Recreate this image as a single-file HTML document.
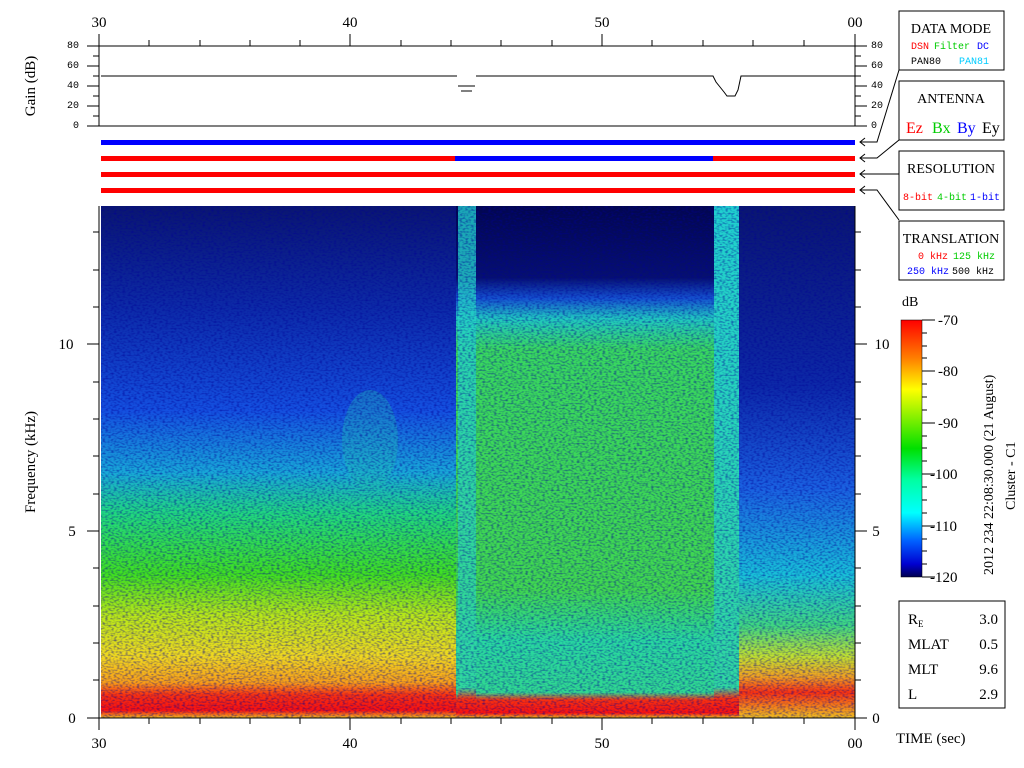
<!DOCTYPE html>
<html><head><meta charset="utf-8"><style>
html,body{margin:0;padding:0;background:#fff;}
svg{display:block;font-family:"Liberation Serif",serif;}
.m{font-family:"Liberation Mono",monospace;}
</style></head><body>
<svg width="1024" height="768" viewBox="0 0 1024 768" xmlns="http://www.w3.org/2000/svg">
<defs>
<linearGradient id="gl" x1="0" y1="0" x2="0" y2="1">
<stop offset="0" stop-color="#0a1670"/><stop offset="0.2" stop-color="#0c2aa8"/>
<stop offset="0.4" stop-color="#1450e0"/><stop offset="0.52" stop-color="#18a8d8"/>
<stop offset="0.6" stop-color="#20d880"/><stop offset="0.72" stop-color="#40e020"/>
<stop offset="0.8" stop-color="#b8e818"/><stop offset="0.88" stop-color="#f0d820"/>
<stop offset="0.93" stop-color="#f8a018"/><stop offset="0.955" stop-color="#f83010"/>
<stop offset="0.985" stop-color="#f81010"/><stop offset="1" stop-color="#f0c020"/>
</linearGradient>
<linearGradient id="gm" x1="0" y1="0" x2="0" y2="1">
<stop offset="0" stop-color="#020650"/><stop offset="0.14" stop-color="#061070"/>
<stop offset="0.18" stop-color="#1450d0"/><stop offset="0.22" stop-color="#20c8c0"/>
<stop offset="0.28" stop-color="#38d860"/><stop offset="0.75" stop-color="#40d850"/>
<stop offset="0.85" stop-color="#28d8a0"/><stop offset="0.95" stop-color="#30d890"/>
<stop offset="0.965" stop-color="#f83010"/><stop offset="0.99" stop-color="#f81010"/>
<stop offset="1" stop-color="#f0c020"/>
</linearGradient>
<linearGradient id="gr" x1="0" y1="0" x2="0" y2="1">
<stop offset="0" stop-color="#0a1670"/><stop offset="0.35" stop-color="#0c28a8"/>
<stop offset="0.55" stop-color="#1a60e0"/><stop offset="0.72" stop-color="#18c0d8"/>
<stop offset="0.82" stop-color="#40d880"/><stop offset="0.88" stop-color="#c0e030"/>
<stop offset="0.92" stop-color="#f0a020"/><stop offset="0.95" stop-color="#f83010"/>
<stop offset="1" stop-color="#f0c020"/>
</linearGradient>
<linearGradient id="gs" x1="0" y1="0" x2="0" y2="1">
<stop offset="0" stop-color="#20d0d0"/><stop offset="0.94" stop-color="#30d8a0"/>
<stop offset="0.962" stop-color="#f83010"/><stop offset="0.99" stop-color="#f81010"/><stop offset="1" stop-color="#f0c020"/>
</linearGradient>
<linearGradient id="cb" x1="0" y1="0" x2="0" y2="1">
<stop offset="0" stop-color="#ff0000"/><stop offset="0.15" stop-color="#ff8000"/>
<stop offset="0.27" stop-color="#ffff00"/><stop offset="0.5" stop-color="#00e000"/>
<stop offset="0.62" stop-color="#00ffa0"/><stop offset="0.75" stop-color="#00ffff"/>
<stop offset="0.86" stop-color="#0060ff"/><stop offset="0.95" stop-color="#0000d0"/>
<stop offset="1" stop-color="#000050"/>
</linearGradient>
<filter id="nz" x="0" y="0" width="1" height="1">
<feTurbulence type="fractalNoise" baseFrequency="0.35 0.6" numOctaves="1" seed="3"/>
<feColorMatrix values="0 0 0 0 0  0 0 0 0 0  0 0 0 0 0.3  0 0 0 1.4 -0.6"/>
</filter>
</defs>

<g font-size="15" text-anchor="middle">
<text x="99" y="27">30</text><text x="350" y="27">40</text><text x="602" y="27">50</text><text x="855" y="27">00</text>
</g>
<g stroke="#000" stroke-width="1">
<line x1="99" y1="34" x2="99" y2="46"/><line x1="350" y1="34" x2="350" y2="46"/><line x1="602" y1="34" x2="602" y2="46"/><line x1="855" y1="34" x2="855" y2="46"/>
<line x1="149" y1="40" x2="149" y2="46"/><line x1="200" y1="40" x2="200" y2="46"/><line x1="250" y1="40" x2="250" y2="46"/><line x1="300" y1="40" x2="300" y2="46"/>
<line x1="401" y1="40" x2="401" y2="46"/><line x1="451" y1="40" x2="451" y2="46"/><line x1="501" y1="40" x2="501" y2="46"/><line x1="552" y1="40" x2="552" y2="46"/>
<line x1="652" y1="40" x2="652" y2="46"/><line x1="703" y1="40" x2="703" y2="46"/><line x1="753" y1="40" x2="753" y2="46"/><line x1="804" y1="40" x2="804" y2="46"/>
<line x1="87" y1="46" x2="867" y2="46"/><line x1="87" y1="126" x2="867" y2="126"/>
<line x1="99" y1="46" x2="99" y2="126"/><line x1="855" y1="46" x2="855" y2="126"/>
<line x1="87" y1="66" x2="99" y2="66"/><line x1="87" y1="86" x2="99" y2="86"/><line x1="87" y1="106" x2="99" y2="106"/>
<line x1="93" y1="56" x2="99" y2="56"/><line x1="93" y1="76" x2="99" y2="76"/><line x1="93" y1="96" x2="99" y2="96"/><line x1="93" y1="116" x2="99" y2="116"/>
<line x1="855" y1="66" x2="867" y2="66"/><line x1="855" y1="86" x2="867" y2="86"/><line x1="855" y1="106" x2="867" y2="106"/>
<line x1="855" y1="56" x2="861" y2="56"/><line x1="855" y1="76" x2="861" y2="76"/><line x1="855" y1="96" x2="861" y2="96"/><line x1="855" y1="116" x2="861" y2="116"/>
<polyline fill="none" points="101,76 457,76"/><line x1="458" y1="86" x2="475" y2="86"/><line x1="461" y1="91" x2="472" y2="91"/>
<polyline fill="none" points="476,76 713,76 716,82 720,87 724,92 727,96 735,96 738,90 741,76 855,76"/>
</g>
<g font-size="10" class="m" text-anchor="end">
<text x="79" y="48">80</text><text x="79" y="68">60</text><text x="79" y="88">40</text><text x="79" y="108">20</text><text x="79" y="128">0</text>
</g>
<g font-size="10" class="m">
<text x="871" y="48">80</text><text x="871" y="68">60</text><text x="871" y="88">40</text><text x="871" y="108">20</text><text x="871" y="128">0</text>
</g>
<text font-size="15" transform="translate(35,86) rotate(-90)" text-anchor="middle">Gain (dB)</text>

<rect x="101" y="140" width="754" height="5" fill="#0000ff"/>
<rect x="101" y="156" width="354" height="5" fill="#ff0000"/>
<rect x="455" y="156" width="258" height="5" fill="#0000ff"/>
<rect x="713" y="156" width="142" height="5" fill="#ff0000"/>
<rect x="101" y="172" width="754" height="5" fill="#ff0000"/>
<rect x="101" y="188" width="754" height="5" fill="#ff0000"/>

<rect x="101" y="206" width="355" height="512" fill="url(#gl)"/>
<rect x="456" y="206" width="258" height="512" fill="url(#gm)"/>
<rect x="738" y="206" width="117" height="512" fill="url(#gr)"/>
<rect x="458" y="206" width="18" height="512" fill="url(#gs)" opacity="0.8"/>
<rect x="714" y="206" width="25" height="512" fill="url(#gs)"/>
<ellipse cx="370" cy="440" rx="28" ry="50" fill="#20c0b0" opacity="0.35"/>
<rect x="101" y="206" width="754" height="512" filter="url(#nz)"/>
<line x1="99" y1="206" x2="99" y2="718" stroke="#000"/>
<line x1="855" y1="206" x2="855" y2="718" stroke="#000"/>
<line x1="87" y1="718" x2="867" y2="718" stroke="#000"/>

<g stroke="#000">
<line x1="87" y1="531" x2="99" y2="531"/><line x1="87" y1="344" x2="99" y2="344"/>
<line x1="93" y1="680" x2="99" y2="680"/><line x1="93" y1="643" x2="99" y2="643"/><line x1="93" y1="606" x2="99" y2="606"/><line x1="93" y1="568" x2="99" y2="568"/>
<line x1="93" y1="494" x2="99" y2="494"/><line x1="93" y1="456" x2="99" y2="456"/><line x1="93" y1="419" x2="99" y2="419"/><line x1="93" y1="382" x2="99" y2="382"/>
<line x1="93" y1="307" x2="99" y2="307"/><line x1="93" y1="270" x2="99" y2="270"/><line x1="93" y1="232" x2="99" y2="232"/>
<line x1="855" y1="531" x2="867" y2="531"/><line x1="855" y1="344" x2="867" y2="344"/>
<line x1="855" y1="680" x2="861" y2="680"/><line x1="855" y1="643" x2="861" y2="643"/><line x1="855" y1="606" x2="861" y2="606"/><line x1="855" y1="568" x2="861" y2="568"/>
<line x1="855" y1="494" x2="861" y2="494"/><line x1="855" y1="456" x2="861" y2="456"/><line x1="855" y1="419" x2="861" y2="419"/><line x1="855" y1="382" x2="861" y2="382"/>
<line x1="855" y1="307" x2="861" y2="307"/><line x1="855" y1="270" x2="861" y2="270"/><line x1="855" y1="232" x2="861" y2="232"/>
<line x1="99" y1="718" x2="99" y2="730"/><line x1="350" y1="718" x2="350" y2="730"/><line x1="602" y1="718" x2="602" y2="730"/><line x1="855" y1="718" x2="855" y2="730"/>
<line x1="149" y1="718" x2="149" y2="724"/><line x1="200" y1="718" x2="200" y2="724"/><line x1="250" y1="718" x2="250" y2="724"/><line x1="300" y1="718" x2="300" y2="724"/>
<line x1="401" y1="718" x2="401" y2="724"/><line x1="451" y1="718" x2="451" y2="724"/><line x1="501" y1="718" x2="501" y2="724"/><line x1="552" y1="718" x2="552" y2="724"/>
<line x1="652" y1="718" x2="652" y2="724"/><line x1="703" y1="718" x2="703" y2="724"/><line x1="753" y1="718" x2="753" y2="724"/><line x1="804" y1="718" x2="804" y2="724"/>
</g>
<g font-size="15">
<text x="72" y="723" text-anchor="middle">0</text><text x="72" y="536" text-anchor="middle">5</text><text x="66" y="349" text-anchor="middle">10</text>
<text x="876" y="723" text-anchor="middle">0</text><text x="876" y="536" text-anchor="middle">5</text><text x="882" y="349" text-anchor="middle">10</text>
<g text-anchor="middle"><text x="99" y="748">30</text><text x="350" y="748">40</text><text x="602" y="748">50</text><text x="855" y="748">00</text></g>
<text x="896" y="743">TIME (sec)</text>
</g>
<text font-size="15" transform="translate(35,462) rotate(-90)" text-anchor="middle">Frequency (kHz)</text>

<g fill="#fff" stroke="#000">
<rect x="899" y="11" width="105" height="59"/><rect x="899" y="81" width="105" height="59"/>
<rect x="899" y="151" width="105" height="59"/><rect x="899" y="221" width="105" height="59"/>
<rect x="899" y="601" width="106" height="107"/>
</g>
<g stroke="#000" fill="none">
<polyline points="899,70 877,142 860,142"/><polyline points="899,140 877,158 860,158"/>
<polyline points="899,174 860,174"/><polyline points="899,220 877,190 860,190"/>
<polyline points="865,138 860,142 865,146"/><polyline points="865,154 860,158 865,162"/>
<polyline points="865,170 860,174 865,178"/><polyline points="865,186 860,190 865,194"/>
</g>
<g font-size="14" text-anchor="middle">
<text x="951" y="33">DATA MODE</text><text x="951" y="103">ANTENNA</text>
<text x="951" y="173">RESOLUTION</text><text x="951" y="243">TRANSLATION</text>
</g>
<g class="m" font-size="10">
<text x="911" y="49" fill="#f00">DSN</text><text x="934" y="49" fill="#0c0">Filter</text><text x="977" y="49" fill="#00f">DC</text>
<text x="911" y="64" fill="#000">PAN80</text><text x="959" y="64" fill="#0cf">PAN81</text>
<text x="903" y="200" fill="#f00">8-bit</text><text x="937" y="200" fill="#0c0">4-bit</text><text x="970" y="200" fill="#00f">1-bit</text>
<text x="918" y="259" fill="#f00">0 kHz</text><text x="953" y="259" fill="#0c0">125 kHz</text>
<text x="907" y="274" fill="#00f">250 kHz</text><text x="952" y="274" fill="#000">500 kHz</text>
</g>
<g font-size="16">
<text x="906" y="133" fill="#f00">Ez</text><text x="932" y="133" fill="#0c0">Bx</text><text x="957" y="133" fill="#00f">By</text><text x="982" y="133" fill="#000">Ey</text>
</g>

<text x="902" y="306" font-size="14">dB</text>
<rect x="901" y="320" width="21" height="257" fill="url(#cb)" stroke="#000" stroke-width="0.5"/>
<g stroke="#000">
<line x1="922" y1="320" x2="935" y2="320"/><line x1="922" y1="371" x2="935" y2="371"/><line x1="922" y1="423" x2="935" y2="423"/>
<line x1="922" y1="474" x2="935" y2="474"/><line x1="922" y1="526" x2="935" y2="526"/><line x1="922" y1="577" x2="935" y2="577"/>
<line x1="922" y1="333" x2="927" y2="333"/><line x1="922" y1="346" x2="927" y2="346"/><line x1="922" y1="358" x2="927" y2="358"/>
<line x1="922" y1="384" x2="927" y2="384"/><line x1="922" y1="397" x2="927" y2="397"/><line x1="922" y1="410" x2="927" y2="410"/>
<line x1="922" y1="436" x2="927" y2="436"/><line x1="922" y1="448" x2="927" y2="448"/><line x1="922" y1="461" x2="927" y2="461"/>
<line x1="922" y1="487" x2="927" y2="487"/><line x1="922" y1="500" x2="927" y2="500"/><line x1="922" y1="513" x2="927" y2="513"/>
<line x1="922" y1="539" x2="927" y2="539"/><line x1="922" y1="551" x2="927" y2="551"/><line x1="922" y1="564" x2="927" y2="564"/>
</g>
<g font-size="15">
<text x="938" y="325">-70</text><text x="938" y="376">-80</text><text x="938" y="428">-90</text>
<text x="930" y="479">-100</text><text x="930" y="531">-110</text><text x="930" y="582">-120</text>
</g>
<text font-size="14" transform="translate(993,575) rotate(-90)">2012 234 22:08:30.000 (21 August)</text>
<text font-size="14" transform="translate(1015,510) rotate(-90)">Cluster - C1</text>

<g font-size="15">
<text x="908" y="624">R<tspan font-size="9" dy="3">E</tspan></text><text x="998" y="624" text-anchor="end">3.0</text>
<text x="908" y="649">MLAT</text><text x="998" y="649" text-anchor="end">0.5</text>
<text x="908" y="674">MLT</text><text x="998" y="674" text-anchor="end">9.6</text>
<text x="908" y="699">L</text><text x="998" y="699" text-anchor="end">2.9</text>
</g>
</svg>
</body></html>
